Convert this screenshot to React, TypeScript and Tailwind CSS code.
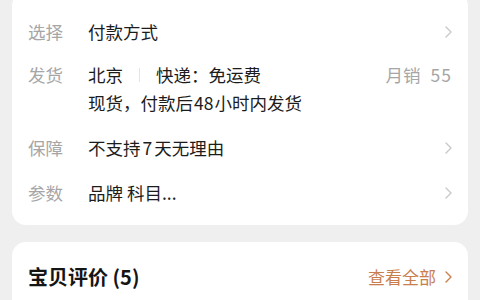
import React from "react";

const Chevron = ({ color = "#c8c8c8" }: { color?: string }) => (
  <svg width="7" height="12" viewBox="0 0 7 12" fill="none">
    <path d="M1 1l5 5-5 5" stroke={color} strokeWidth="1.4" strokeLinecap="round" strokeLinejoin="round" />
  </svg>
);

export default function App() {
  return (
    <div
      className="w-[480px] h-[300px] overflow-hidden bg-[#efefef] px-[12px]"
      style={{ fontFamily: '"Noto Sans CJK SC", "Noto Sans", sans-serif' }}
    >
      <div className="-mt-[8px] bg-white rounded-[14px] pl-[16px] pr-[16px] pt-[26px] pb-[18px] flex flex-col text-[17.5px] leading-[28px]">
        <div className="flex items-center">
          <span className="w-[60px] text-[#a6a6a6]">选择</span>
          <span className="flex-1 text-[#1c1c1c]">付款方式</span>
          <Chevron />
        </div>
        <div className="flex mt-[15px]">
          <span className="w-[60px] text-[#a6a6a6]">发货</span>
          <div className="flex-1 flex flex-col text-[#1c1c1c]">
            <div className="flex items-center">
              <span>北京</span>
              <span className="w-px h-[14px] bg-[#e4e4e4] mx-[16px]" />
              <span>快递：免运费</span>
              <span className="ml-auto text-[#a6a6a6]">
                月销<span className="ml-[10px] tracking-[1px]">55</span>
              </span>
            </div>
            <div>
              现货，付款后<span className="px-[1px]">48</span>小时内发货
            </div>
          </div>
        </div>
        <div className="flex items-center mt-[17px]">
          <span className="w-[60px] text-[#a6a6a6]">保障</span>
          <span className="flex-1 text-[#1c1c1c]">
            不支持<span className="px-[2px]">7</span>天无理由
          </span>
          <Chevron />
        </div>
        <div className="flex items-center mt-[17px]">
          <span className="w-[60px] text-[#a6a6a6]">参数</span>
          <span className="flex-1 text-[#1c1c1c]">品牌 科目...</span>
          <Chevron />
        </div>
      </div>
      <div className="mt-[17px] bg-white rounded-[14px] pl-[16px] pr-[16px] pt-[21px] h-[80px]">
        <div className="flex items-center h-[28px]">
          <span className="text-[20px] font-bold text-[#151515]">宝贝评价 (5)</span>
          <span className="ml-auto flex items-center text-[17px] text-[#c97e4e]">
            查看全部
            <span className="ml-[9px]">
              <Chevron color="#c97e4e" />
            </span>
          </span>
        </div>
      </div>
    </div>
  );
}
